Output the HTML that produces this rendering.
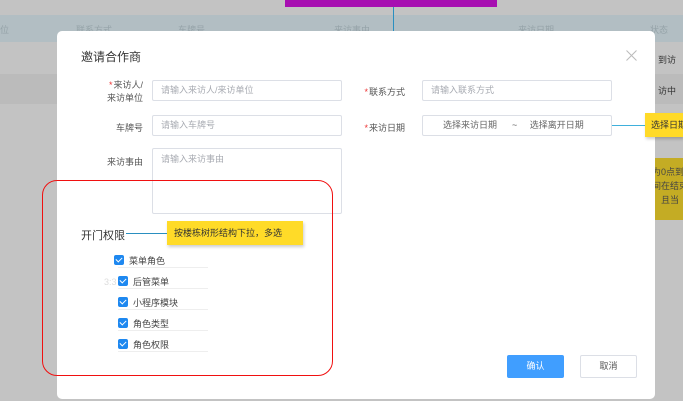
<!DOCTYPE html>
<html><head><meta charset="utf-8">
<style>
*{margin:0;padding:0;box-sizing:border-box}
body{width:683px;height:401px;overflow:hidden;position:relative;background:#c3c3c3;font-family:"Liberation Sans","Noto Sans CJK SC",sans-serif;font-size:9px;color:#555}
.a{position:absolute}
.inp{position:absolute;border:1px solid #dcdfe6;border-radius:2px;height:21px;background:#fff;color:#a8abb2;font-size:9px;line-height:19px;padding-left:8px}
.lbl{position:absolute;font-size:9px;color:#555;text-align:right}
.req{color:#e33;margin-right:1px}
.cb{position:absolute;width:10px;height:10px;background:#1e88f0;border-radius:2px}
.cb:after{content:"";position:absolute;left:3px;top:1px;width:3px;height:5px;border:solid #fff;border-width:0 1.3px 1.3px 0;transform:rotate(45deg)}
.ct{position:absolute;font-size:9px;color:#444}
.ul{position:absolute;height:1px;background:#eee}
.th{position:absolute;top:23px;color:#95a3a8}
</style></head><body>
<div class="a" style="left:0;top:15px;width:683px;height:27px;background:#b2bec3"></div>
<div class="a" style="left:0;top:74px;width:683px;height:30px;background:#bbbbbb"></div>
<div class="th" style="left:0">位</div>
<div class="th" style="left:76px">联系方式</div>
<div class="th" style="left:178px">车牌号</div>
<div class="th" style="left:334px">来访事由</div>
<div class="th" style="left:518px">来访日期</div>
<div class="th" style="left:650px">状态</div>
<div class="a" style="left:658px;top:53px;color:#333">到访</div>
<div class="a" style="left:658px;top:84px;color:#333">访中</div>
<div class="a" style="left:285px;top:0;width:212px;height:7px;background:#a70fb1"></div>
<div class="a" style="left:393px;top:7px;width:1px;height:25px;background:#2a8fc0"></div>
<div class="a" style="left:655px;top:158px;width:28px;height:62px;background:#c4ac24"></div>
<div class="a" style="left:652px;top:165px;color:#444;line-height:14px;font-size:9px;white-space:nowrap">为0点到<br>间在结束<br>，且当</div>

<div class="a" style="left:57px;top:31px;width:598px;height:368px;background:#fff;border-radius:5px"></div>
<div class="a" style="left:81px;top:48px;font-size:12px;color:#333">邀请合作商</div>
<svg class="a" style="left:626px;top:50px" width="11" height="11"><path d="M0.5 0.5L10.5 10.5M10.5 0.5L0.5 10.5" stroke="#bbb" stroke-width="1"/></svg>

<div class="lbl" style="left:90px;top:79px;width:53px;line-height:13px"><span class="req">*</span>来访人/<br>来访单位</div>
<div class="inp" style="left:152px;top:80px;width:190px">请输入来访人/来访单位</div>
<div class="lbl" style="left:355px;top:85px;width:50px"><span class="req">*</span>联系方式</div>
<div class="inp" style="left:422px;top:80px;width:190px">请输入联系方式</div>
<div class="lbl" style="left:90px;top:121px;width:53px">车牌号</div>
<div class="inp" style="left:152px;top:115px;width:190px">请输入车牌号</div>
<div class="lbl" style="left:355px;top:121px;width:50px"><span class="req">*</span>来访日期</div>
<div class="inp" style="left:422px;top:115px;width:190px;color:#666;padding-left:20px">选择来访日期 &nbsp;&nbsp;&nbsp;&nbsp; ~ &nbsp;&nbsp;&nbsp;&nbsp;选择离开日期</div>
<div class="a" style="left:612px;top:125px;width:34px;height:1px;background:#3fb0dc"></div>
<div class="a" style="left:645px;top:113px;width:38px;height:24px;background:#ffda28;color:#333;font-size:9px;line-height:24px;padding-left:6px;white-space:nowrap;overflow:hidden;box-shadow:1px 2px 3px rgba(0,0,0,.2)">选择日期</div>
<div class="lbl" style="left:90px;top:155px;width:53px">来访事由</div>
<div class="inp" style="left:152px;top:148px;width:190px;height:66px;line-height:20px">请输入来访事由</div>

<div class="a" style="left:42px;top:180px;width:291px;height:196px;border:1.5px solid #f01010;border-radius:15px"></div>
<div class="a" style="left:81px;top:227px;font-size:11px;color:#333">开门权限</div>
<div class="a" style="left:126px;top:233px;width:42px;height:1px;background:#2a8fc0"></div>
<div class="a" style="left:167px;top:221px;width:136px;height:24px;background:#ffdb28;color:#333;font-size:9px;line-height:24px;padding-left:7px;box-shadow:1px 2px 3px rgba(0,0,0,.2)">按楼栋树形结构下拉，多选</div>

<div class="cb" style="left:114px;top:255px"></div><div class="ct" style="left:129px;top:254px">菜单角色</div><div class="ul" style="left:118px;top:267px;width:90px"></div>
<div class="a" style="left:104px;top:277px;color:#ddd;font-size:9px">3:3</div>
<div class="cb" style="left:118px;top:276px"></div><div class="ct" style="left:133px;top:275px">后管菜单</div><div class="ul" style="left:118px;top:288px;width:90px"></div>
<div class="cb" style="left:118px;top:297px"></div><div class="ct" style="left:133px;top:296px">小程序模块</div><div class="ul" style="left:118px;top:309px;width:90px"></div>
<div class="cb" style="left:118px;top:318px"></div><div class="ct" style="left:133px;top:317px">角色类型</div><div class="ul" style="left:118px;top:330px;width:90px"></div>
<div class="cb" style="left:118px;top:339px"></div><div class="ct" style="left:133px;top:338px">角色权限</div><div class="ul" style="left:118px;top:351px;width:90px"></div>

<div class="a" style="left:507px;top:355px;width:57px;height:23px;background:#409eff;border-radius:2px;color:#fff;text-align:center;line-height:23px">确认</div>
<div class="a" style="left:580px;top:355px;width:57px;height:23px;border:1px solid #dcdfe6;border-radius:2px;color:#555;text-align:center;line-height:21px;background:#fff">取消</div>
</body></html>
